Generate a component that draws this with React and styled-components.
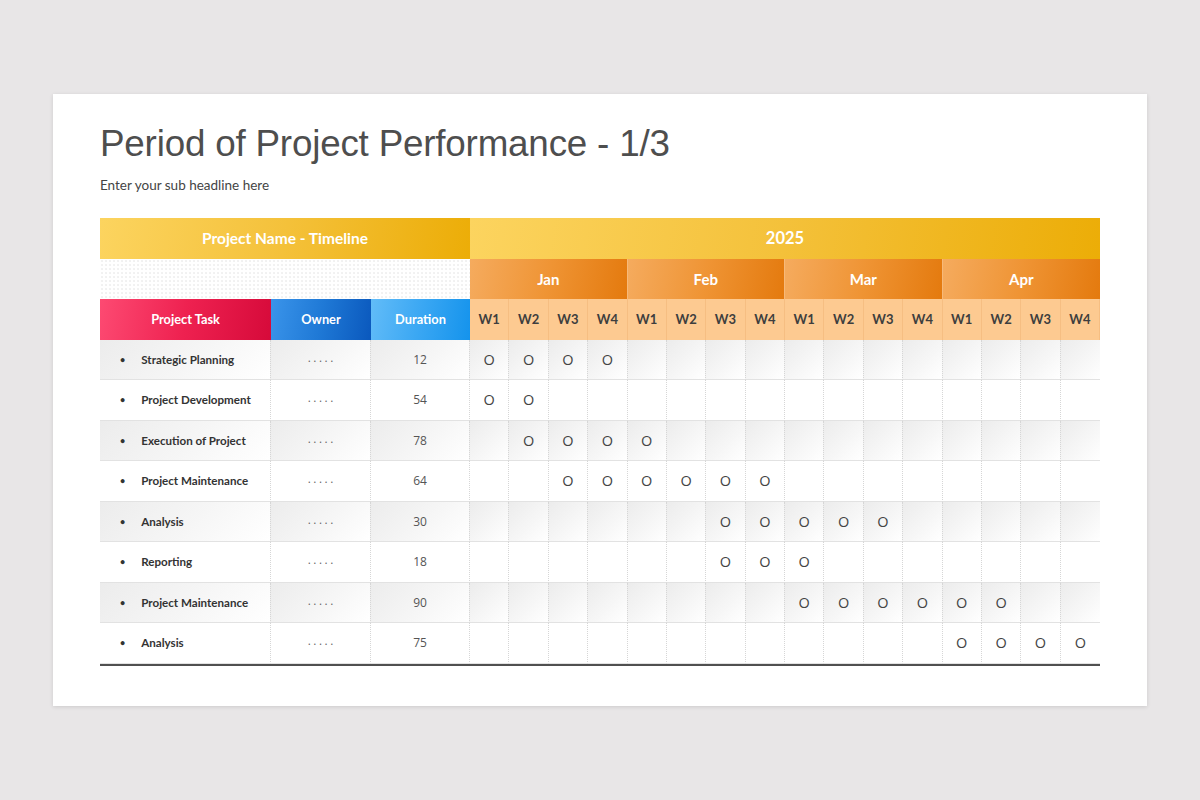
import React from "react";
import styled, { createGlobalStyle, css } from "styled-components";

const Global = createGlobalStyle`
  html, body { margin: 0; padding: 0; }
  body {
    background: #e8e6e7;
    width: 1200px;
    height: 800px;
    overflow: hidden;
    font-family: Lato, "Open Sans", sans-serif;
  }
`;

const Page = styled.div`
  width: 1200px;
  height: 800px;
  display: flex;
  justify-content: center;
  padding-top: 94px;
  box-sizing: border-box;
`;

const Card = styled.div`
  width: 1094px;
  height: 612px;
  background: #fff;
  box-shadow: 0 1px 4px rgba(0, 0, 0, 0.12);
  box-sizing: border-box;
  padding: 24px 47px 0 47px;
  display: flex;
  flex-direction: column;
`;

const Title = styled.h1`
  margin: 0;
  font-family: "Liberation Sans", Arial, sans-serif;
  font-weight: 400;
  font-size: 36.8px;
  line-height: 52px;
  color: #4e4e4e;
  letter-spacing: -0.2px;
`;

const Subtitle = styled.p`
  margin: 6px 0 0 0;
  font-family: Lato, sans-serif;
  font-size: 13.5px;
  line-height: 18px;
  color: #444;
`;

const Grid = styled.div`
  margin-top: 24px;
  display: grid;
  grid-template-columns: 171px 100px 99px repeat(16, 1fr);
  grid-auto-rows: 40.5px;
  width: 1000px;
  border-bottom: 2px solid #505050;
`;

const Band = styled.div`
  grid-column: ${(p) => p.$span};
  display: flex;
  align-items: center;
  justify-content: center;
  color: #fff;
  font-weight: 700;
  font-size: ${(p) => p.$size || 14}px;
  background: ${(p) => p.$bg};
  box-sizing: border-box;
  ${(p) => p.$border && css`border-right: 1px solid ${p.$border};`}
`;

const Blank = styled.div`
  grid-column: 1 / 4;
  background-color: #fff;
  background-image: radial-gradient(#f1f1f1 0.7px, transparent 0.8px);
  background-size: 4px 4px;
`;

const Week = styled.div`
  display: flex;
  align-items: center;
  justify-content: center;
  background: #fdca91;
  color: #3e3e3e;
  font-weight: 700;
  font-size: 13px;
  box-sizing: border-box;
  border-right: 1px solid #f6be82;
  &:last-of-type { border-right: none; }
`;

const Cell = styled.div`
  display: flex;
  align-items: center;
  justify-content: ${(p) => p.$align || "center"};
  box-sizing: border-box;
  border-bottom: 1px solid #e2e2e2;
  border-right: 1px dotted #d6d6d6;
  background: ${(p) =>
    p.$shade
      ? "linear-gradient(135deg, #ececec 0%, #f6f6f6 55%, #ffffff 100%)"
      : "#fff"};
  color: #444;
  font-size: 12px;
  ${(p) => p.$last && css`border-right: none;`}
`;

const TaskCell = styled(Cell)`
  padding-left: 20px;
  font-weight: 700;
  font-size: 11.6px;
  color: #333;
  gap: 16px;
`;

const Bullet = styled.span`
  font-size: 9px;
  color: #333;
`;

const Dots = styled.span`
  letter-spacing: 3px;
  margin-right: -3px;
  font-size: 11px;
  color: #666;
  transform: translateY(-2px);
`;

const Num = styled.span`
  font-family: "Open Sans", sans-serif;
  font-size: 12px;
  color: #555;
`;

const Mark = styled.span`
  font-family: "Open Sans", sans-serif;
  font-size: 14.5px;
  color: #444;
`;

const months = ["Jan", "Feb", "Mar", "Apr"];

const rows = [
  { name: "Strategic Planning", dur: 12, on: [0, 3] },
  { name: "Project Development", dur: 54, on: [0, 1] },
  { name: "Execution of Project", dur: 78, on: [1, 4] },
  { name: "Project Maintenance", dur: 64, on: [2, 7] },
  { name: "Analysis", dur: 30, on: [6, 10] },
  { name: "Reporting", dur: 18, on: [6, 8] },
  { name: "Project Maintenance", dur: 90, on: [8, 13] },
  { name: "Analysis", dur: 75, on: [12, 15] },
];

const yellow = "linear-gradient(100deg, #fcd45f 0%, #f4c13a 50%, #ecad07 100%)";
const orange = "linear-gradient(100deg, #f5ab5e 0%, #ef9434 50%, #e47a0e 100%)";

export default function App() {
  return (
    <>
      <Global />
      <Page>
        <Card>
          <Title>Period of Project Performance - 1/3</Title>
          <Subtitle>Enter your sub headline here</Subtitle>
          <Grid>
            <Band $span="1 / 4" $bg={yellow} $size={15.5}>
              Project Name - Timeline
            </Band>
            <Band $span="4 / 20" $bg={yellow} $size={16.5}>
              2025
            </Band>

            <Blank />
            {months.map((m, i) => (
              <Band
                key={m}
                $span={`${4 + i * 4} / span 4`}
                $bg={orange}
                $size={15}
                $border={i < 3 ? "#f7b979" : null}
              >
                {m}
              </Band>
            ))}

            <Band $span="1" $bg="linear-gradient(100deg, #fd4a72 0%, #ee2150 50%, #d60a3a 100%)" $size={12.8}>
              Project Task
            </Band>
            <Band $span="2" $bg="linear-gradient(100deg, #3a94ea 0%, #1f79d6 50%, #0a58bd 100%)" $size={12.8}>
              Owner
            </Band>
            <Band $span="3" $bg="linear-gradient(100deg, #62bcf8 0%, #3aa7f3 50%, #1493ec 100%)" $size={12.8}>
              Duration
            </Band>
            {Array.from({ length: 16 }, (_, i) => (
              <Week key={i}>W{(i % 4) + 1}</Week>
            ))}

            {rows.map((r, ri) => {
              const shade = ri % 2 === 0;
              return (
                <React.Fragment key={ri}>
                  <TaskCell $shade={shade} $align="flex-start">
                    <Bullet>•</Bullet>
                    {r.name}
                  </TaskCell>
                  <Cell $shade={shade}>
                    <Dots>.....</Dots>
                  </Cell>
                  <Cell $shade={shade}>
                    <Num>{r.dur}</Num>
                  </Cell>
                  {Array.from({ length: 16 }, (_, wi) => (
                    <Cell key={wi} $shade={shade} $last={wi === 15}>
                      {wi >= r.on[0] && wi <= r.on[1] ? <Mark>O</Mark> : null}
                    </Cell>
                  ))}
                </React.Fragment>
              );
            })}
          </Grid>
        </Card>
      </Page>
    </>
  );
}
